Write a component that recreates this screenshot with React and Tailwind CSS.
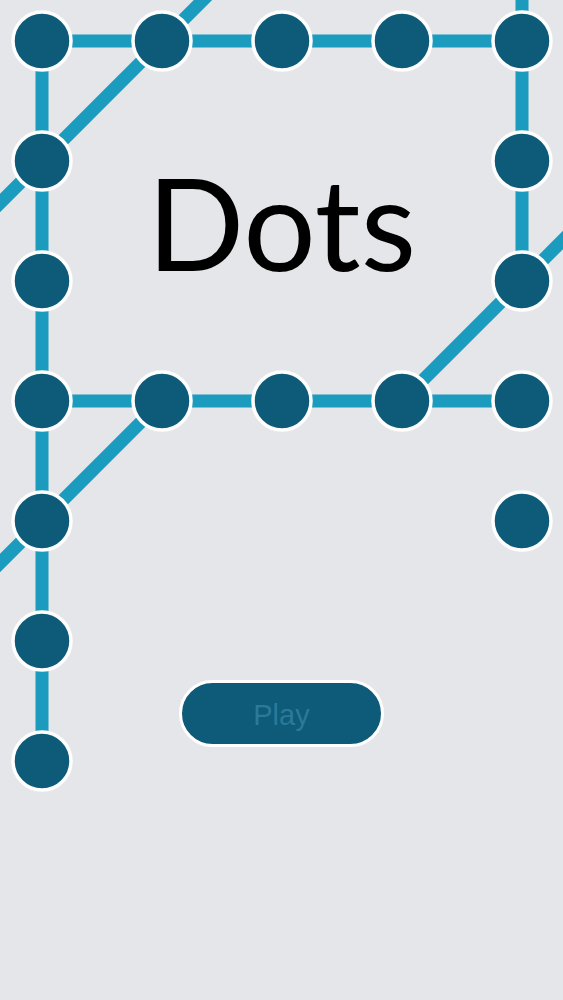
const COLS = [42, 162, 282, 402, 522];
const ROWS = [41, 161, 281, 401, 521, 641, 761];

// dots on the board, as [x, y]
const DOTS = [
  ...COLS.map((x) => [x, 41]),
  ...ROWS.slice(1).map((y) => [42, y]),
  [522, 161],
  [522, 281],
  [162, 401],
  [282, 401],
  [402, 401],
  [522, 401],
  [522, 521],
];

// connecting strokes, drawn under the dots
const LINES = [
  [42, 41, 522, 41],
  [42, 41, 42, 761],
  [522, -10, 522, 281],
  [42, 401, 522, 401],
  [-10, 213, 213, -10],
  [-10, 573, 162, 401],
  [402, 401, 573, 230],
];

function Board() {
  return (
    <svg className="absolute inset-0" width="563" height="1000" viewBox="0 0 563 1000">
      {LINES.map(([x1, y1, x2, y2], i) => (
        <line key={i} x1={x1} y1={y1} x2={x2} y2={y2} stroke="#1b9cbf" strokeWidth="13" />
      ))}
      {DOTS.map(([cx, cy], i) => (
        <circle key={i} cx={cx} cy={cy} r="29" fill="#0e5a79" stroke="#ffffff" strokeWidth="3.5" />
      ))}
    </svg>
  );
}

export default function App() {
  return (
    <div className="relative h-[1000px] w-full overflow-hidden bg-[#e5e6e9]">
      <Board />
      <div className="relative flex flex-col items-center pt-[158px]">
        <h1
          className="text-[128px] leading-none font-normal text-black"
          style={{ fontFamily: "Lato, 'Open Sans', sans-serif" }}
        >
          Dots
        </h1>
        <button
          className="mt-[394px] flex h-[67px] w-[205px] items-center justify-center rounded-full border-[3px] border-white bg-[#0e5a79] pt-1 text-[29px] text-[#2b7998]"
          style={{ fontFamily: "'Liberation Sans', Arial, sans-serif" }}
        >
          Play
        </button>
      </div>
    </div>
  );
}
